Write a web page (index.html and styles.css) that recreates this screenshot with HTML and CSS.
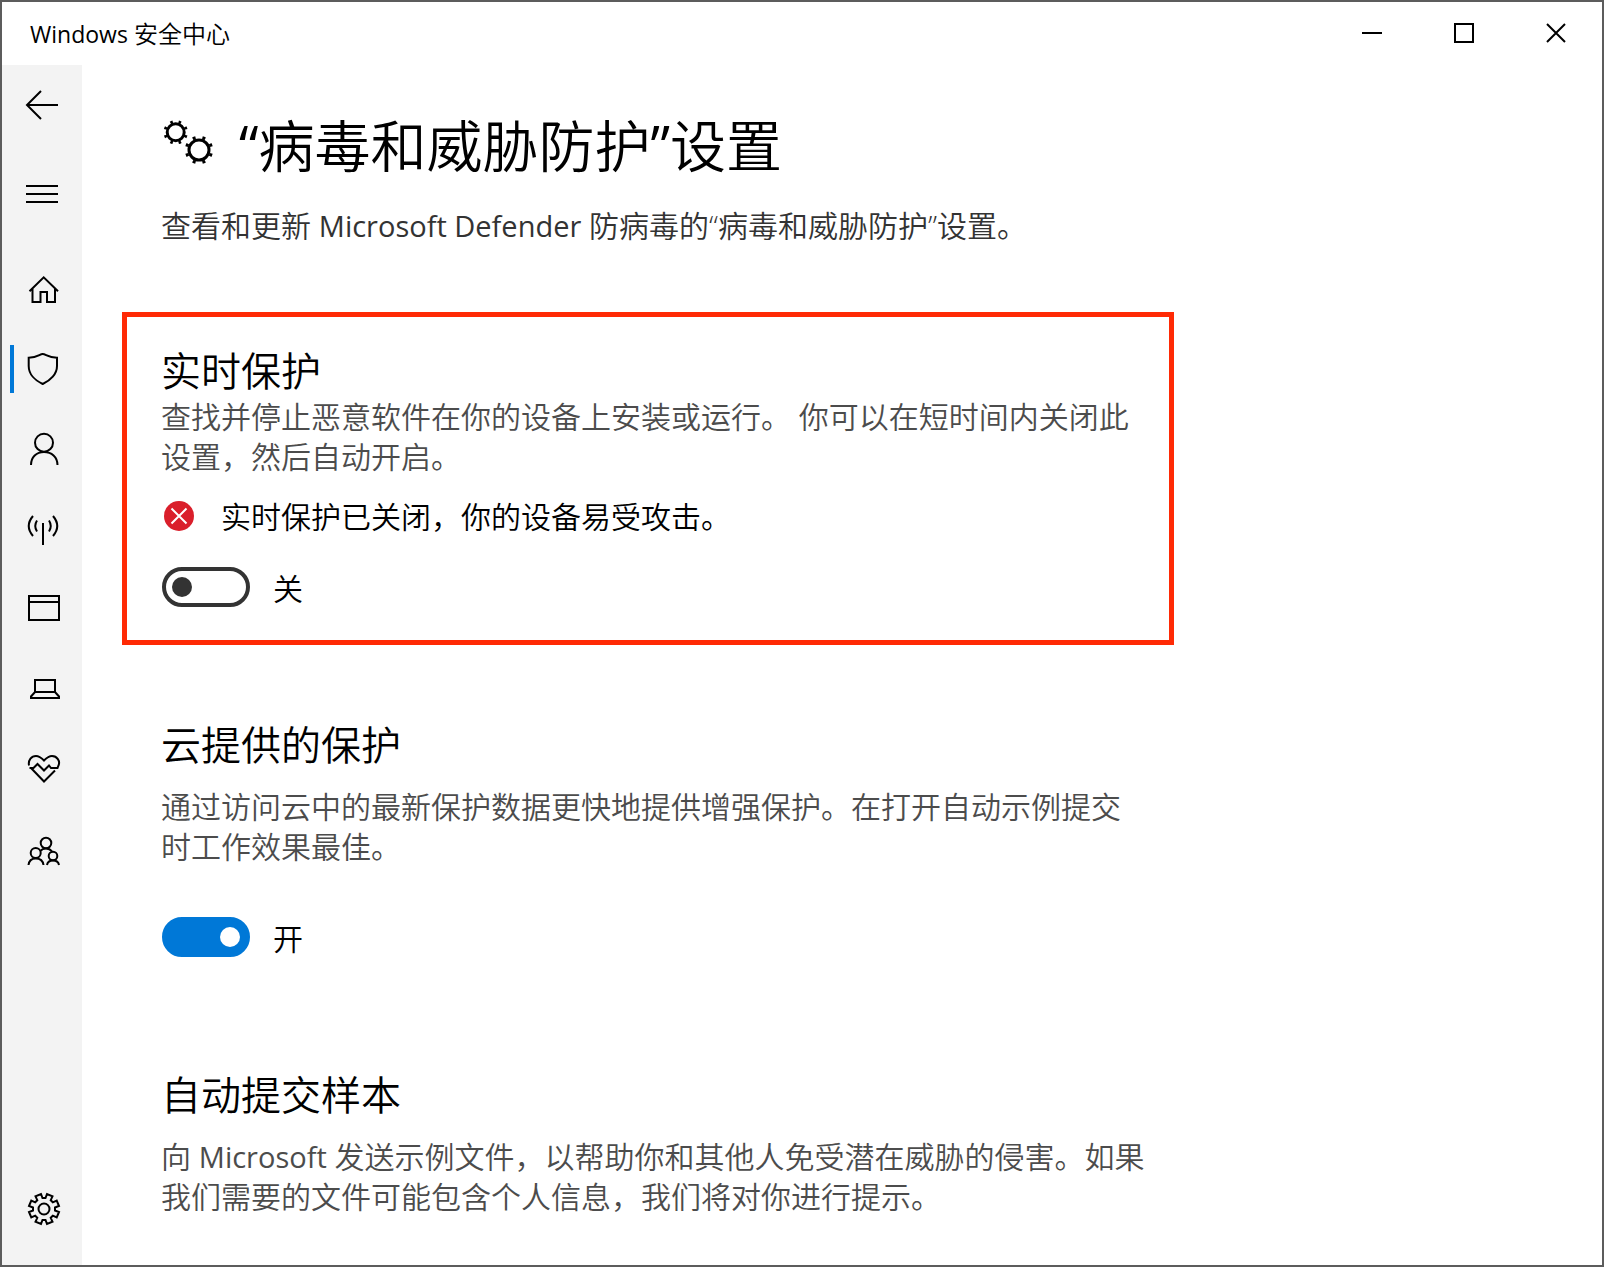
FILE: index.html
```html
<!DOCTYPE html>
<html lang="zh-CN">
<head>
  <meta charset="UTF-8">
  <meta name="viewport" content="width=device-width, initial-scale=1.0">
  <title>Windows 安全中心</title>
  <link rel="stylesheet" href="styles.css">
</head>
<body>
  <div class="window">
    <header class="title-bar">
      <span class="title"><span class="latin">Windows</span> 安全中心</span>
      <div class="window-buttons">
        <button type="button" aria-label="最小化">
          <svg width="22" height="22" viewBox="0 0 22 22"><path d="M1 10H21"/></svg>
        </button>
        <button type="button" aria-label="最大化">
          <svg width="22" height="22" viewBox="0 0 22 22"><path d="M2 1H20V19H2Z"/></svg>
        </button>
        <button type="button" aria-label="关闭">
          <svg width="22" height="22" viewBox="0 0 22 22"><path d="M2 1L20 19M20 1L2 19"/></svg>
        </button>
      </div>
    </header>

    <div class="body">
      <nav class="sidebar">
        <button type="button" class="nav-item" aria-label="返回">
          <svg class="icon" viewBox="0 0 40 40"><path d="M36 20H6M19 6L5 20L19 34"/></svg>
        </button>
        <button type="button" class="nav-item menu" aria-label="菜单">
          <svg class="icon" viewBox="0 0 40 40"><path d="M4 12H36M4 20H36M4 28H36"/></svg>
        </button>
        <a class="nav-item" href="#home" aria-label="主页">
          <svg class="icon" viewBox="0 0 40 40"><path d="M7.5 21.3L21.7 7.3L36 21.3M10.5 18.5V32H18.5V22H25V32H33V18.5"/></svg>
        </a>
        <a class="nav-item current" href="#virus" aria-label="病毒和威胁防护">
          <svg class="icon" viewBox="0 0 40 40"><path d="M20.7 4C17.5 4 16 7.7 6.7 7.7V16C6.7 24 13 30.5 20.7 34C28.5 30.5 35 24 35 16V7.7C25.5 7.7 24 4 20.7 4Z"/></svg>
        </a>
        <a class="nav-item" href="#account" aria-label="帐户保护">
          <svg class="icon" viewBox="0 0 40 40"><circle cx="22" cy="12.7" r="9"/><path d="M9 35C9 27 14.5 22 22 22S35.5 27 35.5 35"/></svg>
        </a>
        <a class="nav-item" href="#network" aria-label="防火墙和网络保护">
          <svg class="icon" viewBox="0 0 40 40"><path d="M21 13V35M15 10.5Q11.5 16 15 21.5M27 10.5Q30.5 16 27 21.5M11 6Q2.5 16 11 26M31 6Q39.5 16 31 26"/></svg>
        </a>
        <a class="nav-item" href="#apps" aria-label="应用和浏览器控制">
          <svg class="icon" viewBox="0 0 40 40"><path d="M7 6H37V30H7ZM7 12H37"/></svg>
        </a>
        <a class="nav-item" href="#device" aria-label="设备安全性">
          <svg class="icon" viewBox="0 0 40 40"><path d="M13 22V10H33V22M13 22H33L37 26.5V28H9V26.5Z"/></svg>
        </a>
        <a class="nav-item" href="#health" aria-label="设备性能和运行状况">
          <svg class="icon" viewBox="0 0 40 40"><path d="M7 15.5C6 10 9.5 6 14 6C17.5 6 19.5 8 22 10.5C24.5 8 26.5 6 30 6C35 6 38.5 11 36.5 15.5L35.5 18H29L27 15.5L22 20.5L15.5 14L11.5 18H7.5M9 18L22 31.5L33 20.5"/></svg>
        </a>
        <a class="nav-item" href="#family" aria-label="家庭选项">
          <svg class="icon" viewBox="0 0 40 40"><circle cx="24" cy="13" r="5.3"/><circle cx="13.7" cy="23" r="5"/><circle cx="31" cy="26" r="4.3"/><path d="M6.5 35C7 31 9.5 28.5 13.7 28.5S21 31 21.5 35M25 35C25.5 32 28 30.5 31 30.5S36.5 32 37 35M18.5 21C20 19 22 18.5 24 18.5S28.5 19.5 30 21.5"/></svg>
        </a>
        <a class="nav-item settings" href="#settings" aria-label="设置">
          <svg class="icon" viewBox="0 0 40 40">
            <g transform="translate(22 20)">
              <circle r="5.5"/>
              <path d="M-3-15L-1.5-11H1.5L3-15L8.5-12.7L6.7-8.8L8.8-6.7L12.7-8.5L15-3L11-1.5V1.5L15 3L12.7 8.5L8.8 6.7L6.7 8.8L8.5 12.7L3 15L1.5 11H-1.5L-3 15L-8.5 12.7L-6.7 8.8L-8.8 6.7L-12.7 8.5L-15 3L-11 1.5V-1.5L-15-3L-12.7-8.5L-8.8-6.7L-6.7-8.8L-8.5-12.7Z"/>
            </g>
          </svg>
        </a>
      </nav>

      <main class="content">
        <div class="page-head">
          <h1>
            <svg class="gears" viewBox="0 0 52 56">
              <circle class="ring" cx="14.7" cy="15.3" r="8.5"/>
              <circle class="teeth" cx="14.7" cy="15.3" r="10.7" pathLength="80"/>
              <circle class="ring" cx="38" cy="33" r="10"/>
              <circle class="teeth" cx="38" cy="33" r="12.7" pathLength="80"/>
            </svg>
            <span><span class="latin">“</span>病毒和威胁防护<span class="latin">”</span>设置</span>
          </h1>
          <p class="intro">查看和更新 <span class="latin">Microsoft Defender</span> 防病毒的“病毒和威胁防护”设置。</p>
        </div>

        <section class="setting highlighted">
          <h2>实时保护</h2>
          <p>查找并停止恶意软件在你的设备上安装或运行。 你可以在短时间内关闭此设置，然后自动开启。</p>
          <div class="alert">
            <svg class="alert-icon" viewBox="0 0 34 34">
              <circle cx="18" cy="16" r="15"/>
              <path d="M10.5 8.5L25.5 23.5M25.5 8.5L10.5 23.5"/>
            </svg>
            <span>实时保护已关闭，你的设备易受攻击。</span>
          </div>
          <label class="toggle">
            <input type="checkbox" role="switch">
            <span>关</span>
          </label>
        </section>

        <section class="setting">
          <h2>云提供的保护</h2>
          <p>通过访问云中的最新保护数据更快地提供增强保护。在打开自动示例提交时工作效果最佳。</p>
          <label class="toggle">
            <input type="checkbox" role="switch" checked>
            <span>开</span>
          </label>
        </section>

        <section class="setting">
          <h2>自动提交样本</h2>
          <p>向 <span class="latin">Microsoft</span> 发送示例文件，以帮助你和其他人免受潜在威胁的侵害。如果我们需要的文件可能包含个人信息，我们将对你进行提示。</p>
        </section>
      </main>
    </div>
  </div>
</body>
</html>
```
FILE: styles.css
```css
* {
  box-sizing: border-box;
}

body {
  margin: 0;
  font-family: "Open Sans", "Noto Sans CJK SC", sans-serif;
  font-weight: 350;
  font-size: 30px;
  line-height: 40px;
  color: #000;
  background-color: #fff;
}

h1, h2, p {
  margin: 0;
  font-weight: 350;
}

svg {
  display: block;
  flex-shrink: 0;
  fill: none;
  stroke: #000;
  stroke-width: 2;
}

.latin {
  font-weight: 400;
  line-height: 1;
}

p .latin {
  font-size: 29px;
}

.window {
  display: flex;
  flex-direction: column;
  min-height: 100vh;
  border: 2px solid #5c5c5c;
}

/* title bar */
.title-bar {
  display: flex;
  justify-content: space-between;
  align-items: center;
  height: 63px;
  padding-left: 28px;
}

.title {
  font-size: 24px;
}

.title .latin {
  font-size: 23px;
}

.window-buttons {
  display: flex;
  align-self: stretch;
}

.window-buttons button {
  display: flex;
  align-items: center;
  justify-content: center;
  width: 92px;
  padding: 0;
  border: 0;
  background: none;
}

.body {
  display: flex;
  flex: 1;
}

/* sidebar */
.sidebar {
  display: flex;
  flex-direction: column;
  flex-shrink: 0;
  width: 80px;
  padding-bottom: 16px;
  background-color: #f3f3f3;
}

.nav-item {
  position: relative;
  display: flex;
  align-items: center;
  justify-content: center;
  height: 80px;
  padding: 0;
  border: 0;
  background: none;
}

.menu {
  margin: 9px 0 16px;
}

.settings {
  margin-top: auto;
}

.current::before {
  content: "";
  position: absolute;
  left: 8px;
  top: 15px;
  width: 4px;
  height: 48px;
  background-color: #0078d7;
}

.icon {
  width: 40px;
  height: 40px;
}

/* content */
.content {
  flex: 1;
  max-width: 1132px;
  padding: 40px;
}

.page-head {
  margin-bottom: 66px;
  padding-left: 39px;
}

h1 {
  display: flex;
  align-items: center;
  gap: 26px;
  font-size: 56px;
  line-height: 80px;
}

.gears {
  width: 52px;
  height: 56px;
}

.gears .ring {
  stroke-width: 3;
}

.gears .teeth {
  stroke-width: 3;
  stroke-dasharray: 3 7;
  stroke-dashoffset: -3.5;
}

.intro {
  margin-top: 21px;
  color: #333;
}

.setting {
  margin-bottom: 108px;
  padding: 0 25px 0 39px;
}

.setting:last-child {
  margin-bottom: 0;
}

h2 {
  margin-bottom: 16px;
  font-size: 40px;
  line-height: 52px;
}

.setting p {
  color: #4c4c4c;
}

.highlighted {
  margin-bottom: 74px;
  padding: 28px 20px 29px 34px;
  border: 5px solid #ff2a05;
}

.highlighted h2 {
  margin-bottom: 0;
}

.alert {
  display: flex;
  align-items: center;
  gap: 26px;
  margin-top: 20px;
}

.alert-icon {
  width: 34px;
  height: 34px;
  stroke: #fff;
}

.alert-icon circle {
  fill: #da1f2b;
  stroke: none;
}

/* the label text sits a little lower than the switch */
.toggle {
  display: flex;
  align-items: flex-start;
  gap: 23px;
  width: fit-content;
  margin-top: 50px;
  padding-left: 1px;
  font-size: 30px;
  line-height: 44px;
}

.highlighted .toggle {
  margin-top: 30px;
}

.toggle input {
  appearance: none;
  display: flex;
  align-items: center;
  width: 88px;
  height: 40px;
  margin: 0;
  padding: 0 6px;
  border: 4px solid #333;
  border-radius: 20px;
}

.toggle input::before {
  content: "";
  width: 20px;
  height: 20px;
  border-radius: 50%;
  background-color: #333;
}

.toggle input:checked {
  justify-content: flex-end;
  border-color: #0078d7;
  background-color: #0078d7;
}

.toggle input:checked::before {
  background-color: #fff;
}
```
